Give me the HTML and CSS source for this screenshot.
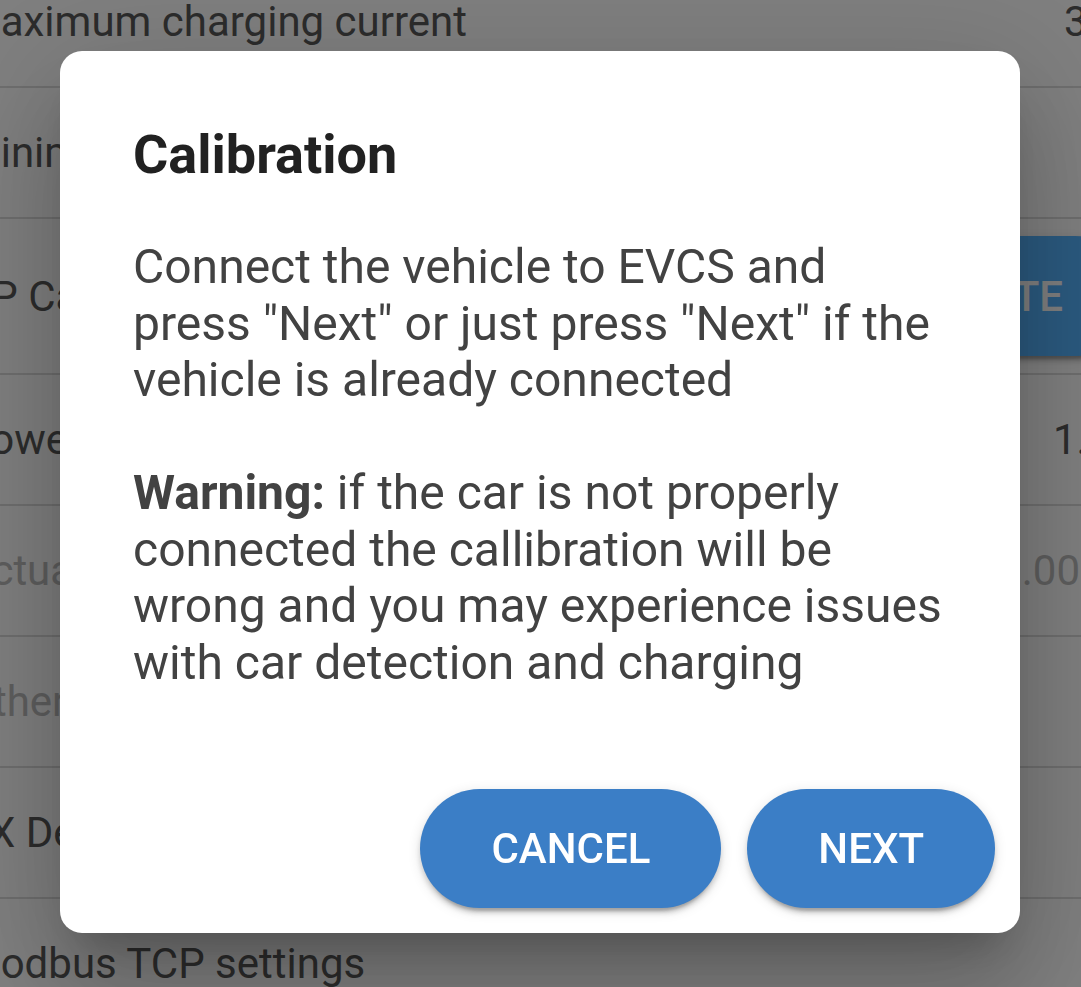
FILE: index.html
```html
<!DOCTYPE html>
<html lang="en">
<head>
    <meta charset="UTF-8">
    <meta name="viewport" content="width=device-width, initial-scale=1.0">
    <title>EVCS Settings</title>
    <link rel="stylesheet" href="styles.css">
</head>
<body>

    <ul class="settings">
        <li class="setting">
            <span class="setting-label">Maximum charging current</span>
            <span class="setting-value">32 A</span>
        </li>
        <li class="setting">
            <span class="setting-label">Minimum charging current</span>
        </li>
        <li class="setting setting-tall">
            <span class="setting-label">CP Calibration</span>
            <button class="btn btn-setting">Calibrate</button>
        </li>
        <li class="setting">
            <span class="setting-label">Power factor</span>
            <span class="setting-value">1.8 A</span>
        </li>
        <li class="setting setting-disabled">
            <span class="setting-label">Actual power</span>
            <span class="setting-value">0.00 kW</span>
        </li>
        <li class="setting setting-disabled">
            <span class="setting-label">Other settings</span>
        </li>
        <li class="setting">
            <span class="setting-label">TX Delay</span>
        </li>
        <li class="setting">
            <span class="setting-label">Modbus TCP settings</span>
        </li>
    </ul>

    <div class="overlay">
        <div class="dialog">
            <h2 class="dialog-title">Calibration</h2>
            <div class="dialog-content">
                Connect the vehicle to EVCS and press "Next" or just press "Next" if the vehicle is already connected
                <br><br>
                <b>Warning:</b> if the car is not properly connected the callibration will be wrong and you may experience issues with car detection and charging
            </div>
            <div class="dialog-actions">
                <button class="btn">Cancel</button>
                <button class="btn">Next</button>
            </div>
        </div>
    </div>

</body>
</html>
```

FILE: styles.css
```css
html, body {
    margin: 0;
    height: 100%;
    overflow: hidden;
}

body {
    background-color: #ffffff;
    font-family: Roboto, 'Noto Sans', sans-serif;
}

/* settings list behind the dialog (page is scrolled) */
.settings {
    list-style: none;
    margin: -43px 0 0 -60px;
    padding: 0;
    width: 1219px;
}

.setting {
    display: flex;
    align-items: center;
    justify-content: space-between;
    box-sizing: border-box;
    height: 131px;
    padding: 0 24px;
    border-bottom: 2px solid #dcdcdc;
    font-size: 42px;
    color: #585858;
    white-space: nowrap;
}

.setting-value {
    margin-right: -14px;
}

.setting-tall {
    height: 156px;
}

.setting-disabled {
    color: #bcbcbc;
}

.btn {
    height: 119px;
    padding: 0 71px;
    border: none;
    border-radius: 60px;
    background-color: #3b7ec6;
    color: #ffffff;
    font-family: Roboto, 'Noto Sans', sans-serif;
    font-size: 42px;
    font-weight: 500;
    text-transform: uppercase;
    box-shadow: 0 8px 3px -5px rgba(0, 0, 0, 0.2), 0 5px 5px 0 rgba(0, 0, 0, 0.14), 0 3px 13px 0 rgba(0, 0, 0, 0.12);
    cursor: pointer;
}

.btn-setting {
    height: 120px;
    padding: 0 72px;
    background-color: #56b4fe;
}

/* dialog */
.overlay {
    position: fixed;
    inset: 0;
    padding-bottom: 3px;
    background-color: rgba(0, 0, 0, 0.5);
    display: flex;
    align-items: center;
    justify-content: center;
}

.dialog {
    width: 960px;
    box-sizing: border-box;
    margin-right: 1px;
    padding-top: 72px;
    background-color: #ffffff;
    border-radius: 22px;
    box-shadow: 0 29px 40px -18px rgba(0, 0, 0, 0.2), 0 64px 100px 8px rgba(0, 0, 0, 0.14), 0 24px 120px 20px rgba(0, 0, 0, 0.12);
}

.dialog-title {
    margin: 0 73px 52px;
    font-size: 54px;
    line-height: 64px;
    font-weight: 700;
    color: #212121;
}

.dialog-content {
    margin: 0 73px;
    font-size: 48px;
    line-height: 56.5px;
    color: #424242;
}

.dialog-content b {
    font-weight: 700;
}

.dialog-actions {
    display: flex;
    justify-content: flex-end;
    gap: 26px;
    padding: 98px 25px 25px;
}
```
